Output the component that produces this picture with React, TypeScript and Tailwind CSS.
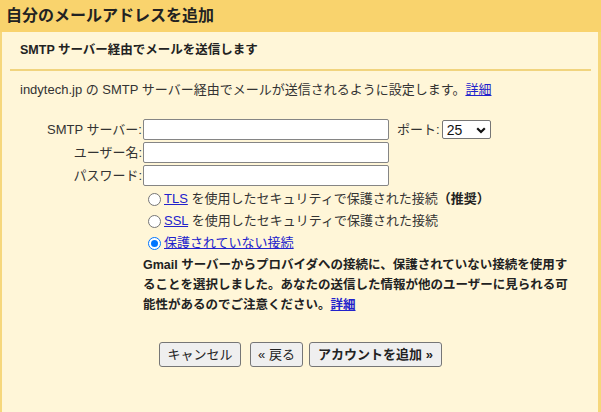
import type { ReactNode } from "react";

const FONT = "font-['Liberation_Sans','Noto_Sans_CJK_JP',sans-serif]";

function Field({ label, children }: { label: string; children?: ReactNode }) {
  return (
    <div className="flex h-[21px] items-center">
      <div className="w-[141px] pr-[1px] text-right leading-[21px] text-[#333]">{label}</div>
      <div className="h-[21px] w-[246px] rounded-[2px] border border-[#858585] bg-white" />
      {children}
    </div>
  );
}

function Radio({ checked, children }: { checked?: boolean; children: ReactNode }) {
  return (
    <div className="flex h-[22px] items-center">
      {checked ? (
        <span className="ml-[5px] flex size-[13px] items-center justify-center rounded-full border-[1.5px] border-[#0075ff] bg-white">
          <span className="size-[7px] rounded-full bg-[#0075ff]" />
        </span>
      ) : (
        <span className="ml-[5px] size-[13px] rounded-full border border-[#767676] bg-white" />
      )}
      <span className="ml-[3px] leading-[20px] text-[#333]">{children}</span>
    </div>
  );
}

function Link({ children }: { children: ReactNode }) {
  return <a className="text-[#2222cc] underline">{children}</a>;
}

export default function App() {
  return (
    <div
      className={`flex h-[412px] w-[601px] flex-col overflow-hidden bg-[#fff6d8] text-[13px] text-[#222] ${FONT}`}
    >
      <div className="flex h-[32px] items-center bg-[#f9d36d] px-[6px] text-[16px] font-bold text-[#222]">
        自分のメールアドレスを追加
      </div>

      <div className="flex-1 border-r-[3px] border-l-2 border-[#f6d77c]">
        <div className="mt-[8px] pl-[18px] text-[12.5px] font-bold leading-[20px]">
          SMTP サーバー経由でメールを送信します
        </div>

        <div className="mr-[7px] ml-[8px] mt-[9px] h-[2px] bg-[#f1d47e]" />

        <div className="mt-[9px] pl-[18px] leading-[20px] text-[#333]">
          indytech.jp の SMTP サーバー経由でメールが送信されるように設定します。
          <Link>詳細</Link>
        </div>

        <div className="mt-[19px] flex flex-col gap-[2px]">
          <Field label="SMTP サーバー:">
            <span className="ml-[8px] text-[#333]">ポート:</span>
            <div className="relative ml-[2px] flex h-[19px] w-[49px] items-center rounded-[2px] border border-[#767676] bg-white pl-[4px] text-[14px] leading-none text-[#111]">
              25
              <svg
                className="absolute right-[4px] top-[6px]"
                width="10"
                height="7"
                viewBox="0 0 10 7"
                fill="none"
              >
                <path d="M1.2 1.2 5 5 8.8 1.2" stroke="#111" strokeWidth="2.2" />
              </svg>
            </div>
          </Field>
          <Field label="ユーザー名:" />
          <Field label="パスワード:" />
        </div>

        <div className="mt-[2px] pl-[141px]">
          <Radio>
            <Link>TLS</Link> を使用したセキュリティで保護された接続
            <span className="font-bold text-[#222]">（推奨）</span>
          </Radio>
          <Radio>
            <Link>SSL</Link> を使用したセキュリティで保護された接続
          </Radio>
          <Radio checked>
            <Link>保護されていない接続</Link>
          </Radio>

          <p className="pt-[1px] text-[12.5px] font-bold leading-[20px] text-[#222]">
            Gmail サーバーからプロバイダへの接続に、保護されていない接続を使用す
            <br />
            ることを選択しました。あなたの送信した情報が他のユーザーに見られる可
            <br />
            能性があるのでご注意ください。<Link>詳細</Link>
          </p>
        </div>

        <div className="mt-[27px] flex pl-[157px]">
          <button
            type="button"
            className="h-[25px] w-[82px] rounded-[3px] border border-[#767676] bg-[#efefef] text-[13px] text-[#222]"
          >
            キャンセル
          </button>
          <button
            type="button"
            className="ml-[9px] h-[25px] w-[53px] rounded-[3px] border border-[#767676] bg-[#efefef] text-[13px] text-[#222]"
          >
            « 戻る
          </button>
          <button
            type="button"
            className="ml-[6px] h-[25px] w-[133px] rounded-[3px] border border-[#767676] bg-[#efefef] text-[13px] font-bold text-[#222]"
          >
            アカウントを追加 »
          </button>
        </div>
      </div>
    </div>
  );
}
